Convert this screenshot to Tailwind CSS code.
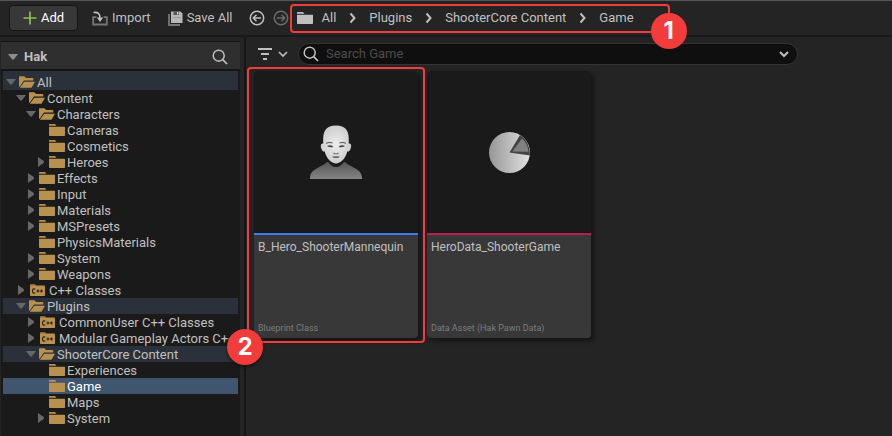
<!DOCTYPE html>
<html lang="en">
<head>
<meta charset="utf-8">
<meta name="viewport" content="width=device-width, initial-scale=1">
<title>Content Browser</title>
<script src="https://cdn.jsdelivr.net/npm/@tailwindcss/browser@4"></script>
</head>
<body class="flex h-screen flex-col overflow-hidden bg-[#242424] font-['Roboto',sans-serif] text-[13px] leading-4 text-[#c0c0c0]">
<svg class="hidden" aria-hidden="true">
  <symbol id="down" viewBox="0 0 10 16"><path d="M0 5h10L5.800 10.500H4.200z" fill="#686868"/></symbol>
  <symbol id="right" viewBox="0 0 10 16"><path d="M2 3v10l6-4.200V7.200z" fill="#686868"/></symbol>
  <symbol id="closed" viewBox="0 0 16 16"><path d="M0 2.600Q0 2 .6 2H6l1.500 1.700H0zM0 4.700h15.400q.6 0 .6.600v8q0 .7-.7.700H.700q-.7 0-.7-.7z" fill="#b8914f"/></symbol>
  <symbol id="open" viewBox="0 0 16 16"><path d="M0 13V3q0-.7.700-.7h4.500l2 1.700h6.300q.8 0 .8.800V6.500H5L1.200 12z" fill="#b8914f"/><path d="M.8 13.800 5.300 7.700H16l-3.200 5.500q-.3.600-1 .6z" fill="#b8914f"/></symbol>
  <symbol id="cpp" viewBox="0 0 16 16"><path d="M1 4V2.700Q1 2 1.700 2H6l1.500 2z" fill="#8c6a35"/><rect x="1" y="3.500" width="15" height="10.500" rx=".8" fill="#b8914f"/><path d="M6.300 7.300Q3.500 6 3.500 9T6.300 10.700M7.500 9h3M9 7.500v3M11 9h3M12.500 7.500v3" fill="none" stroke="#2a2115" stroke-width="1.100"/></symbol>
  <symbol id="chev" viewBox="0 0 8 12"><path d="m1.500 1.500 4 4.500-4 4.500" fill="none" stroke="#c0c0c0" stroke-width="2"/></symbol>
  <symbol id="glass" viewBox="0 0 16 16"><circle cx="6.700" cy="6.700" r="5.500" fill="none" stroke="#c0c0c0" stroke-width="1.500"/><path d="m10.700 10.700 4.300 4.300" stroke="#c0c0c0" stroke-width="1.700"/></symbol>
</svg>

<header class="flex h-[37px] shrink-0 items-center border-t border-b-2 border-t-[#555555] border-b-[#1a1a1a] pl-[9px]">
  <button class="flex h-[26px] w-[69px] items-center justify-center gap-1 rounded border border-[#161616] bg-[#383838] text-white">
    <svg class="size-[14px]" viewBox="0 0 14 14"><path d="M7 .5v13M.5 7h13" stroke="#8bc24a" stroke-width="1.700"/></svg>Add
  </button>
  <button class="ml-[14px] flex items-center gap-1">
    <svg class="size-4" viewBox="0 0 16 16"><path d="M4.500 7.200H1.200V14.500h13.600V7.200H11.500" fill="none" stroke="#777" stroke-width="1.800"/><path d="M1.500 2.500Q8 1.500 8 8" fill="none" stroke="#c0c0c0" stroke-width="1.600"/><path d="M4.800 7.500h6.400L8 12z" fill="#c0c0c0"/></svg>Import
  </button>
  <button class="ml-[17px] flex items-center gap-1">
    <svg class="size-[15px]" viewBox="0 0 15 15"><path d="M1 3v11h11" fill="none" stroke="#777" stroke-width="1.800"/><path d="M3 .500h9.500L14.500 2.500V12H3z" fill="#b8b8b8"/><path d="M5.500.500h5.500v3.500H5.500z" fill="#555"/><path d="M9 1h1.300v2.500H9z" fill="#ddd"/><path d="M5 6.500h7.500" stroke="#999"/></svg>Save All
  </button>
  <button class="ml-[17px]" aria-label="Back"><svg class="block size-4" viewBox="0 0 16 16" fill="none" stroke="#c0c0c0" stroke-width="1.500"><circle cx="8" cy="8" r="6.700"/><path d="M12 8H4.500M7.500 4.800 4.300 8l3.200 3.200"/></svg></button>
  <button class="ml-2" aria-label="Forward"><svg class="block size-4" viewBox="0 0 16 16" fill="none" stroke="#6b6b6b" stroke-width="1.500"><circle cx="8" cy="8" r="6.700"/><path d="M4 8h7.500M8.500 4.800 11.700 8l-3.200 3.200"/></svg></button>
  <nav aria-label="Path" class="relative ml-px flex h-[29px] items-center rounded border-2 border-[#f23b3b] pr-[34px] pl-[5px]">
    <svg class="mr-2 size-4" viewBox="0 0 16 16"><path d="M0 2.600Q0 2 .6 2H6l1.500 1.700H0zM0 4.700h15.400q.6 0 .6.600v8q0 .7-.7.700H.700q-.7 0-.7-.7z" fill="#c0c0c0"/></svg>
    <a href="#">All</a>
    <svg class="mr-3 ml-[13px] h-3 w-2" aria-hidden="true"><use href="#chev"/></svg>
    <a href="#">Plugins</a>
    <svg class="mr-3 ml-[13px] h-3 w-2" aria-hidden="true"><use href="#chev"/></svg>
    <a href="#">ShooterCore Content</a>
    <svg class="mr-3 ml-[13px] h-3 w-2" aria-hidden="true"><use href="#chev"/></svg>
    <a href="#">Game</a>
    <span class="absolute -right-[19px] -bottom-[18px] z-10 flex size-9 items-center justify-center rounded-full bg-[#f23b3b] font-['Inter',sans-serif] text-2xl font-bold text-white">1</span>
  </nav>
</header>

<div class="flex min-h-0 flex-1">
  <aside class="flex w-[246px] shrink-0 flex-col border-r-2 border-[#151515] pt-1 pr-1 pl-px">
    <div class="flex h-7 shrink-0 items-center border-t border-[#151515] bg-[#2f2f2f] pt-[2px] pr-3 pl-[7px]">
      <svg class="mr-[6px] h-4 w-[10px]" viewBox="0 0 10 16"><path d="M0 5h10L5.800 10.500H4.200z" fill="#8d8d8d"/></svg>
      <h2 class="flex-1 font-bold">Hak</h2>
      <button aria-label="Search folders"><svg class="block size-4"><use href="#glass"/></svg></button>
    </div>
    <div role="tree" aria-label="Folders" class="flex-1 overflow-hidden border-t-2 border-[#151515] bg-[#1a1a1a] pr-[2px] pl-[2px] leading-[18px] whitespace-nowrap">
      <div role="treeitem" class="flex h-[19px] items-start bg-[#2b313a] pt-[3px] pl-[3px]"><svg class="mr-[3px] h-4 w-[10px]"><use href="#down"/></svg><svg class="mr-[2px] size-4"><use href="#open"/></svg>All</div>
      <div role="treeitem" class="flex h-4 items-start pl-[13px]"><svg class="mr-[3px] h-4 w-[10px]"><use href="#down"/></svg><svg class="mr-[2px] size-4"><use href="#open"/></svg>Content</div>
      <div role="treeitem" class="flex h-4 items-start pl-[23px]"><svg class="mr-[3px] h-4 w-[10px]"><use href="#down"/></svg><svg class="mr-[2px] size-4"><use href="#open"/></svg>Characters</div>
      <div role="treeitem" class="flex h-4 items-start pl-[46px]"><svg class="mr-[2px] size-4"><use href="#closed"/></svg>Cameras</div>
      <div role="treeitem" class="flex h-4 items-start pl-[46px]"><svg class="mr-[2px] size-4"><use href="#closed"/></svg>Cosmetics</div>
      <div role="treeitem" class="flex h-4 items-start pl-[33px]"><svg class="mr-[3px] h-4 w-[10px]"><use href="#right"/></svg><svg class="mr-[2px] size-4"><use href="#closed"/></svg>Heroes</div>
      <div role="treeitem" class="flex h-4 items-start pl-[23px]"><svg class="mr-[3px] h-4 w-[10px]"><use href="#right"/></svg><svg class="mr-[2px] size-4"><use href="#closed"/></svg>Effects</div>
      <div role="treeitem" class="flex h-4 items-start pl-[23px]"><svg class="mr-[3px] h-4 w-[10px]"><use href="#right"/></svg><svg class="mr-[2px] size-4"><use href="#closed"/></svg>Input</div>
      <div role="treeitem" class="flex h-4 items-start pl-[23px]"><svg class="mr-[3px] h-4 w-[10px]"><use href="#right"/></svg><svg class="mr-[2px] size-4"><use href="#closed"/></svg>Materials</div>
      <div role="treeitem" class="flex h-4 items-start pl-[23px]"><svg class="mr-[3px] h-4 w-[10px]"><use href="#right"/></svg><svg class="mr-[2px] size-4"><use href="#closed"/></svg>MSPresets</div>
      <div role="treeitem" class="flex h-4 items-start pl-[36px]"><svg class="mr-[2px] size-4"><use href="#closed"/></svg>PhysicsMaterials</div>
      <div role="treeitem" class="flex h-4 items-start pl-[23px]"><svg class="mr-[3px] h-4 w-[10px]"><use href="#right"/></svg><svg class="mr-[2px] size-4"><use href="#closed"/></svg>System</div>
      <div role="treeitem" class="flex h-4 items-start pl-[23px]"><svg class="mr-[3px] h-4 w-[10px]"><use href="#right"/></svg><svg class="mr-[2px] size-4"><use href="#closed"/></svg>Weapons</div>
      <div role="treeitem" class="flex h-4 items-start pl-[13px]"><svg class="mr-[3px] h-4 w-[10px]"><use href="#right"/></svg><svg class="mr-1 size-4"><use href="#cpp"/></svg>C++ Classes</div>
      <div role="treeitem" class="flex h-4 items-start bg-[#2b313a] pl-[13px]"><svg class="mr-[3px] h-4 w-[10px]"><use href="#down"/></svg><svg class="mr-[2px] size-4"><use href="#open"/></svg>Plugins</div>
      <div role="treeitem" class="flex h-4 items-start pl-[23px]"><svg class="mr-[3px] h-4 w-[10px]"><use href="#right"/></svg><svg class="mr-1 size-4"><use href="#cpp"/></svg>CommonUser C++ Classes</div>
      <div role="treeitem" class="flex h-4 items-start pl-[23px]"><svg class="mr-[3px] h-4 w-[10px] shrink-0"><use href="#right"/></svg><svg class="mr-1 size-4 shrink-0"><use href="#cpp"/></svg>Modular Gameplay Actors C++</div>
      <div role="treeitem" class="flex h-4 items-start bg-[#2b313a] pl-[23px]"><svg class="mr-[3px] h-4 w-[10px]"><use href="#down"/></svg><svg class="mr-[2px] size-4"><use href="#open"/></svg>ShooterCore Content</div>
      <div role="treeitem" class="flex h-4 items-start pl-[46px]"><svg class="mr-[2px] size-4"><use href="#closed"/></svg>Experiences</div>
      <div role="treeitem" aria-selected="true" class="flex h-4 items-start bg-[#40566f] pl-[46px] text-white"><svg class="mr-[2px] size-4"><use href="#closed"/></svg>Game</div>
      <div role="treeitem" class="flex h-4 items-start pl-[46px]"><svg class="mr-[2px] size-4"><use href="#closed"/></svg>Maps</div>
      <div role="treeitem" class="flex h-4 items-start pl-[33px]"><svg class="mr-[3px] h-4 w-[10px]"><use href="#right"/></svg><svg class="mr-[2px] size-4"><use href="#closed"/></svg>System</div>
    </div>
  </aside>

  <main class="flex min-w-0 flex-1 flex-col pt-[6px]">
    <div class="flex items-center pr-4 pl-3">
      <button class="flex items-center gap-[6px]" aria-label="Filters">
        <svg class="h-4 w-[14px]" viewBox="0 0 14 16"><path d="M0 3h14M3 8h8M5 13h4" stroke="#c0c0c0" stroke-width="1.800"/></svg>
        <svg class="h-4 w-[10px]" viewBox="0 0 10 16"><path d="m1 6 4 4 4-4" fill="none" stroke="#c0c0c0" stroke-width="1.600"/></svg>
      </button>
      <div class="ml-[10px] flex h-[22px] max-w-[500px] flex-1 items-center rounded-full border border-[#343434] bg-[#0f0f0f] pr-2 pl-1">
        <svg class="size-4 shrink-0"><use href="#glass"/></svg>
        <input type="search" aria-label="Search Game" placeholder="Search Game" class="min-w-0 flex-1 bg-transparent px-[7px] outline-none placeholder:text-[#4c4c4c]">
        <button aria-label="Search options"><svg class="block h-3 w-[10px]" viewBox="0 0 10 12"><path d="m1 4 4 4 4-4" fill="none" stroke="#c0c0c0" stroke-width="2"/></svg></button>
      </div>
    </div>

    <div class="flex flex-wrap gap-[9px] px-2 pt-[6px]">
      <article class="relative flex h-[267px] w-[164px] flex-col rounded bg-[#383838] shadow-[3px_3px_4px_#151515]">
        <div class="flex h-[162px] items-center justify-center rounded-t bg-[#1a1a1a]">
          <svg class="h-[54px] w-[52px]" viewBox="0 0 52 54" role="img" aria-label="Blueprint character">
            <defs>
              <radialGradient id="skin"><stop offset="0" stop-color="#ededed"/><stop offset="1" stop-color="#cecece"/></radialGradient>
              <linearGradient id="torso" x2="0" y2="1"><stop stop-color="#555"/><stop offset="1" stop-color="#858585"/></linearGradient>
            </defs>
            <path d="M0 54v-2c1-9 11-9 17-15h18c6 6 16 6 17 15v2z" fill="url(#torso)"/>
            <path d="M17.500 36q4 6 8.500 6t8.500-6v-5h-17z" fill="#1a1a1a"/>
            <path d="M13.300 18.500C12.500 7 15 0.500 26 0.500s13.500 6.500 12.700 18c3-.8 2.800 3 1.800 5.500-.9 2.500-2 2.800-3.300 2.500C36 33 30.500 38.500 26 38.500S16 33 14.800 26.500c-1.300.3-2.400 0-3.300-2.500-1-2.500-1.200-6.300 1.800-5.500z" fill="url(#skin)"/>
            <path d="M16 18.300q3-1.500 6.500-.4M29.500 17.900q3.500-1.100 6.500.4" fill="none" stroke="#555" stroke-width="1"/>
            <path d="M17 21q3.500-1.800 6.500.7-3.300 1.600-6.500-.7M28.500 21.700q3-2.500 6.500-.7-3.200 2.300-6.500.7" fill="#444"/>
            <path d="M23.500 28q1 1 2.500.7 1.500.3 2.500-.7" fill="none" stroke="#777" stroke-width="1.200"/>
            <path d="M22 32q2-1 4-.5 2-.5 4 .5-4 2-8 0" fill="#555"/>
          </svg>
        </div>
        <div class="flex flex-1 flex-col justify-between border-t-2 border-[#3f7cf2] px-1 pt-1 pb-1">
          <h3 class="text-xs leading-4">B_Hero_ShooterMannequin</h3>
          <p class="text-[9px] leading-3 text-[#7c7c7c]">Blueprint Class</p>
        </div>
        <div class="pointer-events-none absolute -top-1 -right-[7px] -bottom-[5px] -left-[7px] rounded border-2 border-[#f23b3b]">
          <span class="absolute -bottom-[24px] -left-[22px] flex size-9 items-center justify-center rounded-full bg-[#f23b3b] font-['Inter',sans-serif] text-2xl font-bold text-white shadow-[0_2px_3px_#151515]">2</span>
        </div>
      </article>
      <article class="flex h-[267px] w-[164px] flex-col rounded bg-[#383838] shadow-[3px_3px_4px_#151515]">
        <div class="flex h-[162px] items-center justify-center rounded-t bg-[#1a1a1a]">
          <svg class="size-[41px]" viewBox="0 0 41 41" role="img" aria-label="Data asset">
            <defs><linearGradient id="pie"><stop stop-color="#969696"/><stop offset="1" stop-color="#e2e2e2"/></linearGradient></defs>
            <circle cx="20.500" cy="20.500" r="20.500" fill="url(#pie)"/>
            <path d="M20.500 20.500 31 3Q41 9 41 23.500z" fill="#444"/>
            <path d="M23.500 19.500 33 6.500Q39 11.500 39.300 19.800z" fill="#808080"/>
          </svg>
        </div>
        <div class="flex flex-1 flex-col justify-between border-t-2 border-[#b91d50] px-1 pt-1 pb-1">
          <h3 class="text-xs leading-4">HeroData_ShooterGame</h3>
          <p class="text-[9px] leading-3 text-[#7c7c7c]">Data Asset (Hak Pawn Data)</p>
        </div>
      </article>
    </div>
  </main>
</div>
</body>
</html>
